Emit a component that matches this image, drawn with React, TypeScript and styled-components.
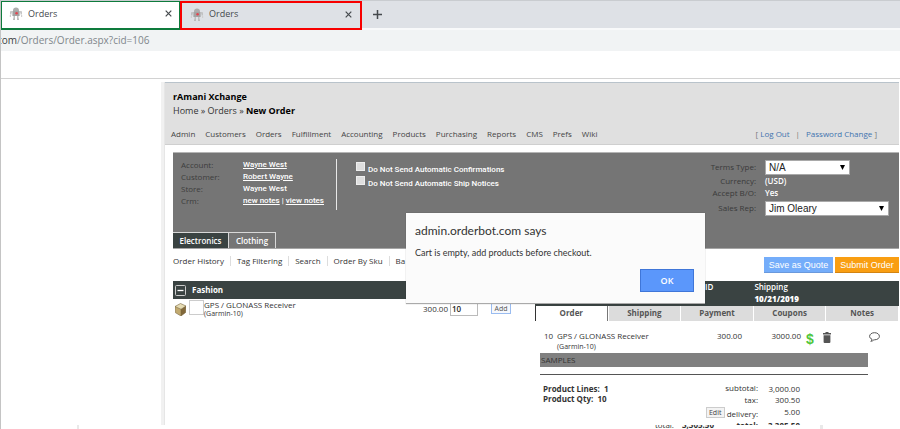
import React from "react";
import styled, { createGlobalStyle } from "styled-components";

const GlobalStyle = createGlobalStyle`
  *, *::before, *::after { box-sizing: border-box; }
  html, body { margin: 0; padding: 0; background: #fff; }
  body { font-family: "Open Sans", "Liberation Sans", sans-serif; font-size: 8px; line-height: 12px; color: #333; }
  button, input, select { font-family: inherit; margin: 0; border-radius: 0; }
  a { color: inherit; text-decoration: none; }
`;

const Window = styled.div`
  position: relative;
  height: 100vh;
  min-width: 880px;
  display: flex;
  flex-direction: column;
  border-left: 1px solid #c4c4c4;
  overflow: hidden;
`;

const TabStrip = styled.div`
  display: flex;
  align-items: stretch;
  height: 30px;
  background: #dee1e6;
  border-top: 1px solid #c9ccd0;
  border-bottom: 2px solid #f8f9fa;
`;

const BrowserTab = styled.div<{ $active?: boolean }>`
  display: flex;
  align-items: center;
  height: 29px;
  width: ${(p) => (p.$active ? "179px" : "182px")};
  padding: 0 ${(p) => (p.$active ? "7px" : "8px")} 3px;
  gap: 5px;
  background: ${(p) => (p.$active ? "#fff" : "#dee1e6")};
  border: ${(p) => (p.$active ? "1px solid #0e7b3c" : "2px solid #f80000")};
  border-bottom-width: 2px;
  color: #45494d;
  font: 9px/14px "Open Sans", "Noto Sans", sans-serif;
`;

const TabTitle = styled.span`
  flex: 1;
`;

const IconButton = styled.button`
  display: flex;
  align-items: center;
  justify-content: center;
  padding: 0;
  border: 0;
  background: none;
  color: #45494d;
`;

const NewTab = styled(IconButton)`
  width: 30px;
`;

const AddressBar = styled.div`
  height: 21px;
  background: #f1f3f4;
  overflow: hidden;
`;

const Address = styled.div`
  margin-left: -4px;
  color: #80868b;
  font: 10px/20px "Open Sans", "Noto Sans", sans-serif;
  & > b { font-weight: 400; color: #3c4043; }
`;

const BookmarksBar = styled.div`
  height: 28px;
  border-bottom: 1px solid #d2d2d2;
`;

const Page = styled.div`
  flex: 1;
  min-height: 0;
  display: flex;
  margin: 3px 1px 0 160px;
  overflow: hidden;
`;

const PageShadow = styled.div`
  width: 4px;
  flex: none;
  background: #f1f1f1;
  border-right: 1px solid #e6e6e6;
`;

const Content = styled.div`
  flex: 1;
  min-width: 0;
`;

const Header = styled.header`
  height: 63px;
  padding: 7px 22px 0 8px;
  background: #e0e0e0;
  border-top: 1px solid #b9c3cb;
  border-bottom: 1px solid #cfcfcf;
`;

const Brand = styled.div`
  color: #000;
  font: 700 9px/13px "Open Sans", "Noto Sans", sans-serif;
`;

const Breadcrumb = styled.div`
  font-size: 9px;
  line-height: 16px;
  color: #333;
  & > b { color: #000; }
`;

const NavRow = styled.div`
  display: flex;
  justify-content: space-between;
  margin-top: 9px;
  margin-left: -2px;
`;

const Nav = styled.nav`
  display: flex;
  gap: 10px;
  color: #444;
`;

const Session = styled.div`
  display: flex;
  gap: 6px;
  color: #777;
  & a { color: #3f73af; }
`;

const Body = styled.div`
  padding: 7px 0 0 8px;
`;

const AccountPanel = styled.section`
  display: flex;
  height: 97px;
  padding-left: 8px;
  background: #757575;
  border-top: 1px solid #b5b5b5;
  border-bottom: 1px solid #a5a5a5;
  color: #fff;
  position: relative;
`;

const Details = styled.dl`
  display: grid;
  grid-template-columns: 62px 1fr;
  grid-auto-rows: 12px;
  width: 156px;
  height: 51px;
  margin: 6px 0 0;
  border-right: 1px solid #e8e8e8;
  & > dt { color: #3d3d3d; }
  & > dd { margin: 0; font-family: Roboto, sans-serif; font-weight: 500; white-space: nowrap; }
  & a { text-decoration: underline; }
`;

const Checks = styled.div`
  display: flex;
  flex-direction: column;
  gap: 2px;
  margin: 9px 0 0 19px;
`;

const CheckLabel = styled.label`
  display: flex;
  gap: 3px;
  height: 12px;
  line-height: 15px;
  font-family: Roboto, sans-serif;
  font-weight: 500;
`;

const Checkbox = styled.input`
  appearance: none;
  width: 9px;
  height: 9px;
  background: #dedede;
  border: 1px solid #eee;
`;

const Terms = styled.div`
  display: grid;
  grid-template-columns: 60px 124px;
  grid-template-rows: 16px 12px 12px 18px;
  column-gap: 9px;
  align-items: center;
  align-content: start;
  margin: 6px 10px 0 auto;
`;

const TermLabel = styled.label`
  text-align: right;
  color: #3a3a3a;
  white-space: nowrap;
`;

const TermValue = styled.span`
  font-weight: 600;
`;

const SelectBox = styled.div<{ $width: number }>`
  display: grid;
  align-items: center;
  width: ${(p) => p.$width}px;
  height: 15px;
  & > * { grid-area: 1 / 1; }
  & > svg { justify-self: end; margin-right: 5px; pointer-events: none; }
`;

const Select = styled.select`
  appearance: none;
  width: 100%;
  height: 15px;
  padding: 0 3px;
  border: 1px solid #a9a9a9;
  background: #fff;
  color: #222;
  font: 10px/13px "Liberation Sans", sans-serif;
`;

const CategoryTabs = styled.div`
  position: absolute;
  left: 0;
  bottom: 0;
  display: flex;
  border: 1px solid #d8d8d8;
  border-width: 1px 1px 0 0;
`;

const CategoryTab = styled.button<{ $active?: boolean }>`
  height: 15px;
  width: ${(p) => (p.$active ? "56px" : "46px")};
  padding: 0;
  border: 0;
  border-right: ${(p) => (p.$active ? "1px solid #d8d8d8" : "0")};
  background: ${(p) => (p.$active ? "#3a4342" : "#757575")};
  color: #fff;
  font-size: 8px;
  font-weight: 600;
`;

const Toolbar = styled.div`
  display: flex;
  align-items: center;
  justify-content: space-between;
  height: 32px;
`;

const ToolLinks = styled.nav`
  display: flex;
  margin-top: -8px;
  color: #333;
  & > a { padding-right: 6px; margin-right: 6px; border-right: 1px solid #ddd; line-height: 10px; white-space: nowrap; }
  & > a:last-child { border: 0; }
`;

const Actions = styled.div`
  display: flex;
  gap: 2px;
`;

const ActionButton = styled.button<{ $submit?: boolean }>`
  width: ${(p) => (p.$submit ? "64px" : "69px")};
  height: 16px;
  padding: 0;
  border: 0;
  border-bottom: 1px solid ${(p) => (p.$submit ? "#d38412" : "#6a99dc")};
  background: ${(p) => (p.$submit ? "#f99e12" : "#74adfa")};
  color: #fff;
  font: 9px/14px "Liberation Sans", sans-serif;
  white-space: nowrap;
`;

const Columns = styled.div`
  display: grid;
  grid-template-columns: 362px minmax(0, 1fr);
`;

const GroupBar = styled.div`
  display: flex;
  align-items: center;
  gap: 6px;
  height: 18px;
  padding-left: 2px;
  background: #3a4342;
  color: #fff;
  font-weight: 700;
`;

const Product = styled.div`
  display: flex;
  align-items: flex-start;
  padding-left: 2px;
`;

const ProductImage = styled.span`
  width: 15px;
  height: 15px;
  margin: 1px 0 0 3px;
  border: 1px solid #ccc;
`;

const BoxIcon = styled.svg`
  margin-top: 4px;
`;

const ProductName = styled.div`
  width: 217px;
  line-height: 11px;
  & > small { display: block; font-size: 7px; line-height: 8px; }
`;

const Price = styled.span`
  width: 27px;
  text-align: right;
  line-height: 19px;
`;

const Quantity = styled.input`
  width: 28px;
  height: 15px;
  margin: 2px 13px 0 2px;
  padding: 0 1px;
  border: 1px solid #bbb;
  color: #222;
  font-size: 8px;
  font-weight: 600;
`;

const AddButton = styled.button`
  width: 20px;
  height: 11px;
  margin-top: 4px;
  padding: 0;
  border: 1px solid #9abcf0;
  background: #f6f8fc;
  color: #555;
  font-size: 7px;
  line-height: 8px;
`;

const OrderHead = styled.div`
  display: grid;
  grid-template-columns: repeat(5, 1fr);
  height: 25px;
  background: #3a4342;
  color: #fff;
  & > div { grid-column: 4; padding-left: 1px; white-space: nowrap; font-weight: 600; }
  & > div:first-child { grid-column: 3; text-align: right; padding-right: 40px; }
  & b { display: block; line-height: 12px; }
`;

const OrderTabs = styled.div`
  display: grid;
  grid-template-columns: repeat(5, 1fr);
  border-right: 1px solid #fff;
`;

const OrderTab = styled.button<{ $active?: boolean }>`
  height: 15px;
  padding: 0 0 2px;
  border: 0;
  border-left: 1px solid ${(p) => (p.$active ? "#333" : "#fff")};
  border-right: ${(p) => (p.$active ? "1px solid #777" : "0")};
  background: ${(p) => (p.$active ? "#fff" : "#dcdcdc")};
  color: #555;
  font-size: 8px;
  font-weight: 700;
`;

const OrderBody = styled.div`
  padding: 9px 31px 0 5px;
`;

const OrderTable = styled.table`
  width: 100%;
  table-layout: fixed;
  border-collapse: collapse;
  & td { padding: 0; vertical-align: top; line-height: 12px; white-space: nowrap; }
  & td + td + td { text-align: right; }
  & small { display: block; font-size: 7px; line-height: 9px; }
`;

const LineActions = styled.div`
  display: flex;
  align-items: flex-start;
  gap: 9px;
  margin: 2px -12px 0 5px;
  & > :last-child { margin-left: auto; }
`;

const Dollar = styled.button`
  padding: 0;
  border: 0;
  background: none;
  color: #4fc63c;
  font: 700 14px/14px "Liberation Sans", sans-serif;
  width: 8px;
`;

const Samples = styled.div`
  height: 14px;
  margin-top: 2px;
  padding-left: 1px;
  background: #808080;
  line-height: 14px;
`;

const Summary = styled.div`
  display: flex;
  justify-content: space-between;
  margin-top: 7px;
  padding: 8px 68px 0 3px;
  border-top: 1px solid #555;
`;

const Counts = styled.div`
  font-weight: 700;
  line-height: 10px;
  padding-top: 1px;
`;

const Totals = styled.dl`
  display: grid;
  grid-template-columns: auto 42px;
  grid-template-rows: 11px 12px 14px 12px;
  margin: 0;
  text-align: right;
  & > dt { display: flex; align-items: flex-end; justify-content: flex-end; gap: 2px; }
  & > dd { margin: 0; }
`;

const EditButton = styled.button`
  width: 19px;
  height: 11px;
  margin-bottom: 2px;
  padding: 0;
  border: 1px solid #ccc;
  background: #f3f3f3;
  color: #444;
  font-size: 7px;
  line-height: 8px;
`;

const NextSheet = styled.div`
  display: flex;
  flex: none;
  height: 4px;
  margin: 0 77px 0 76px;
  border: 2px solid #e9e9e9;
  border-width: 0 3px 0 2px;
  overflow: hidden;
`;

const NextTotal = styled.div`
  display: flex;
  gap: 8px;
  margin: -5px 106px 0 auto;
  line-height: 10px;
`;

const Dialog = styled.div`
  position: absolute;
  left: 405px;
  top: 213px;
  width: 299px;
  height: 91px;
  padding: 9px 9px;
  background: #fbfbfb;
  border-bottom: 1px solid #aaa;
  box-shadow: 0 0 1px rgba(0, 0, 0, 0.3);
  color: #333;
  font-family: Lato, "Open Sans", sans-serif;
  font-size: 9px;
  line-height: 14px;
`;

const DialogTitle = styled.h2`
  margin: 0 0 6px;
  font-size: 12px;
  line-height: 18px;
  font-weight: 400;
`;

const OkButton = styled.button`
  display: block;
  width: 54px;
  height: 23px;
  margin: 9px 2px 0 auto;
  border: 1px solid #3f76d8;
  background: #5b97fb;
  color: #fff;
  font: 600 9px/12px "Open Sans", "Noto Sans", sans-serif;
`;

const Robot = () => (
  <svg width="14" height="13" viewBox="0 0 14 13" aria-hidden="true">
    <path d="M4 3.4Q4.2.6 7 .6t3 2.8V4H4z" fill="#adadad" />
    <path d="M3.4 4h7.2v5H3.4z" fill="#a3a3a3" />
    <path d="M3.3 4.8H1.8v2.7M10.7 4.8h1.5v2.7" fill="none" stroke="#bbb" strokeWidth="1.3" />
    <path d="M1.4 8v2M12.6 8v2" stroke="#cfcfcf" strokeWidth="1.2" />
    <path d="M5.2 9v3M8.8 9v3M4 12.2h2M8 12.2h2" stroke="#bbb" strokeWidth="1.4" />
    <circle cx="7.6" cy="6.2" r="1.3" fill="#e44550" />
  </svg>
);

const Cross = () => (
  <svg width="7" height="7" viewBox="0 0 7 7" aria-hidden="true">
    <path d="M.7.7l5.6 5.6M6.3.7L.7 6.3" stroke="currentColor" strokeWidth="1.2" />
  </svg>
);

const Arrow = () => (
  <svg width="5" height="5" viewBox="0 0 5 5" aria-hidden="true">
    <path d="M0 0h5L2.5 5z" fill="#000" />
  </svg>
);

const navItems = ["Admin", "Customers", "Orders", "Fulfillment", "Accounting", "Products", "Purchasing", "Reports", "CMS", "Prefs", "Wiki"];
const tools = ["Order History", "Tag Filtering", "Search", "Order By Sku", "Ba"];
const orderTabs = ["Order", "Shipping", "Payment", "Coupons", "Notes"];

export default function App() {
  return (
    <>
      <GlobalStyle />
      <Window>
        <TabStrip>
          {[true, false].map((active) => (
            <BrowserTab key={String(active)} $active={active}>
              <Robot />
              <TabTitle>Orders</TabTitle>
              <IconButton aria-label="Close tab"><Cross /></IconButton>
            </BrowserTab>
          ))}
          <NewTab aria-label="New tab">
            <svg width="9" height="9" viewBox="0 0 9 9"><path d="M4.5 0v9M0 4.5h9" stroke="currentColor" strokeWidth="1.5" /></svg>
          </NewTab>
        </TabStrip>
        <AddressBar>
          <Address><b>com</b>/Orders/Order.aspx?cid=106</Address>
        </AddressBar>
        <BookmarksBar />

        <Page>
          <PageShadow />
          <Content>
            <Header>
              <Brand>rAmani Xchange</Brand>
              <Breadcrumb>
                <a href="#home">Home</a> » <a href="#orders">Orders</a> » <b>New Order</b>
              </Breadcrumb>
              <NavRow>
                <Nav>{navItems.map((n) => <a href="#nav" key={n}>{n}</a>)}</Nav>
                <Session>
                  <span>[ <a href="#logout">Log Out</a></span>
                  <span>|</span>
                  <span><a href="#password">Password Change</a> ]</span>
                </Session>
              </NavRow>
            </Header>

            <Body>
              <AccountPanel>
                <Details>
                  <dt>Account:</dt><dd><a href="#account">Wayne West</a></dd>
                  <dt>Customer:</dt><dd><a href="#customer">Robert Wayne</a></dd>
                  <dt>Store:</dt><dd>Wayne West</dd>
                  <dt>Crm:</dt><dd><a href="#new">new notes</a> | <a href="#view">view notes</a></dd>
                </Details>
                <Checks>
                  <CheckLabel><Checkbox type="checkbox" />Do Not Send Automatic Confirmations</CheckLabel>
                  <CheckLabel><Checkbox type="checkbox" />Do Not Send Automatic Ship Notices</CheckLabel>
                </Checks>
                <Terms>
                  <TermLabel htmlFor="terms">Terms Type:</TermLabel>
                  <SelectBox $width={85}><Select id="terms"><option>N/A</option></Select><Arrow /></SelectBox>
                  <TermLabel as="span">Currency:</TermLabel><TermValue>(USD)</TermValue>
                  <TermLabel as="span">Accept B/O:</TermLabel><TermValue>Yes</TermValue>
                  <TermLabel htmlFor="rep">Sales Rep:</TermLabel>
                  <SelectBox $width={124}><Select id="rep"><option>Jim Oleary</option></Select><Arrow /></SelectBox>
                </Terms>
                <CategoryTabs>
                  <CategoryTab $active>Electronics</CategoryTab>
                  <CategoryTab>Clothing</CategoryTab>
                </CategoryTabs>
              </AccountPanel>

              <Toolbar>
                <ToolLinks>{tools.map((t) => <a href="#tool" key={t}>{t}</a>)}</ToolLinks>
                <Actions>
                  <ActionButton>Save as Quote</ActionButton>
                  <ActionButton $submit>Submit Order</ActionButton>
                </Actions>
              </Toolbar>

              <Columns>
                <section>
                  <GroupBar>
                    <svg width="11" height="11" viewBox="0 0 11 11" aria-hidden="true">
                      <rect x=".5" y=".5" width="10" height="10" rx="1" fill="none" stroke="#ccc" />
                      <path d="M2.5 5.5h6" stroke="#fff" strokeWidth="1.3" />
                    </svg>
                    Fashion
                  </GroupBar>
                  <Product>
                    <BoxIcon width="11" height="13" viewBox="0 0 11 13" aria-hidden="true">
                      <path d="M0 3.5L5.5.5 11 3 6 6.3z" fill="#e6dcb4" />
                      <path d="M0 3.5l6 2.8V13L.3 9.6z" fill="#c2aa70" />
                      <path d="M6 6.3L11 3l-.3 6.4L6 13z" fill="#82683a" />
                      <path d="M0 3.5l6 2.8L11 3M6 6.3V13L.3 9.6 0 3.5 5.5.5 11 3l-.3 6.4L6 13" fill="none" stroke="#77643c" strokeWidth=".6" />
                    </BoxIcon>
                    <ProductImage />
                    <ProductName>GPS / GLONASS Receiver<small>(Garmin-10)</small></ProductName>
                    <Price>300.00</Price>
                    <Quantity aria-label="Quantity" defaultValue="10" />
                    <AddButton>Add</AddButton>
                  </Product>
                </section>

                <section>
                  <OrderHead>
                    <div>ID</div>
                    <div>Shipping<b>10/21/2019</b></div>
                  </OrderHead>
                  <OrderTabs>
                    {orderTabs.map((t) => <OrderTab key={t} $active={t === "Order"}>{t}</OrderTab>)}
                  </OrderTabs>
                  <OrderBody>
                    <OrderTable>
                      <colgroup>
                        <col width="17" /><col /><col width="60" /><col width="59" /><col width="67" />
                      </colgroup>
                      <tbody>
                        <tr>
                          <td align="center">10</td>
                          <td>GPS / GLONASS Receiver<small>(Garmin-10)</small></td>
                          <td>300.00</td>
                          <td>3000.00</td>
                          <td>
                            <LineActions>
                              <Dollar aria-label="Discount">$</Dollar>
                              <IconButton aria-label="Delete line">
                                <svg width="8" height="11" viewBox="0 0 8 11"><path d="M0 1h2.5V0h3v1H8v1.5H0zM.6 3.3h6.8V10q0 1-1 1H1.6q-1 0-1-1z" fill="#555" /></svg>
                              </IconButton>
                              <IconButton aria-label="Comment">
                                <svg width="11" height="10" viewBox="0 0 11 10"><path d="M3 7.2C1.4 6.6.6 5.6.6 4.3.6 2.2 2.8.7 5.5.7s4.9 1.5 4.9 3.6-2.2 3.5-4.9 3.5h-.6Q3.8 9.1 1.8 9.3 3 8.3 3 7.2z" fill="none" stroke="#555" strokeWidth="1" /></svg>
                              </IconButton>
                            </LineActions>
                          </td>
                        </tr>
                      </tbody>
                    </OrderTable>
                    <Samples>SAMPLES</Samples>
                    <Summary>
                      <Counts>
                        <div>Product Lines:&nbsp; 1</div>
                        <div>Product Qty:&nbsp; 10</div>
                      </Counts>
                      <Totals>
                        <dt>subtotal:</dt><dd>3,000.00</dd>
                        <dt>tax:</dt><dd>300.50</dd>
                        <dt><EditButton>Edit</EditButton>delivery:</dt><dd>5.00</dd>
                        <dt><b>total:</b></dt><dd><b>3,305.50</b></dd>
                      </Totals>
                    </Summary>
                  </OrderBody>
                </section>
              </Columns>
            </Body>
          </Content>
        </Page>

        <NextSheet>
          <NextTotal><span>total:</span><b>3,305.50</b></NextTotal>
        </NextSheet>

        <Dialog role="alertdialog" aria-labelledby="dialog-title">
          <DialogTitle id="dialog-title">admin.orderbot.com says</DialogTitle>
          Cart is empty, add products before checkout.
          <OkButton>OK</OkButton>
        </Dialog>
      </Window>
    </>
  );
}
